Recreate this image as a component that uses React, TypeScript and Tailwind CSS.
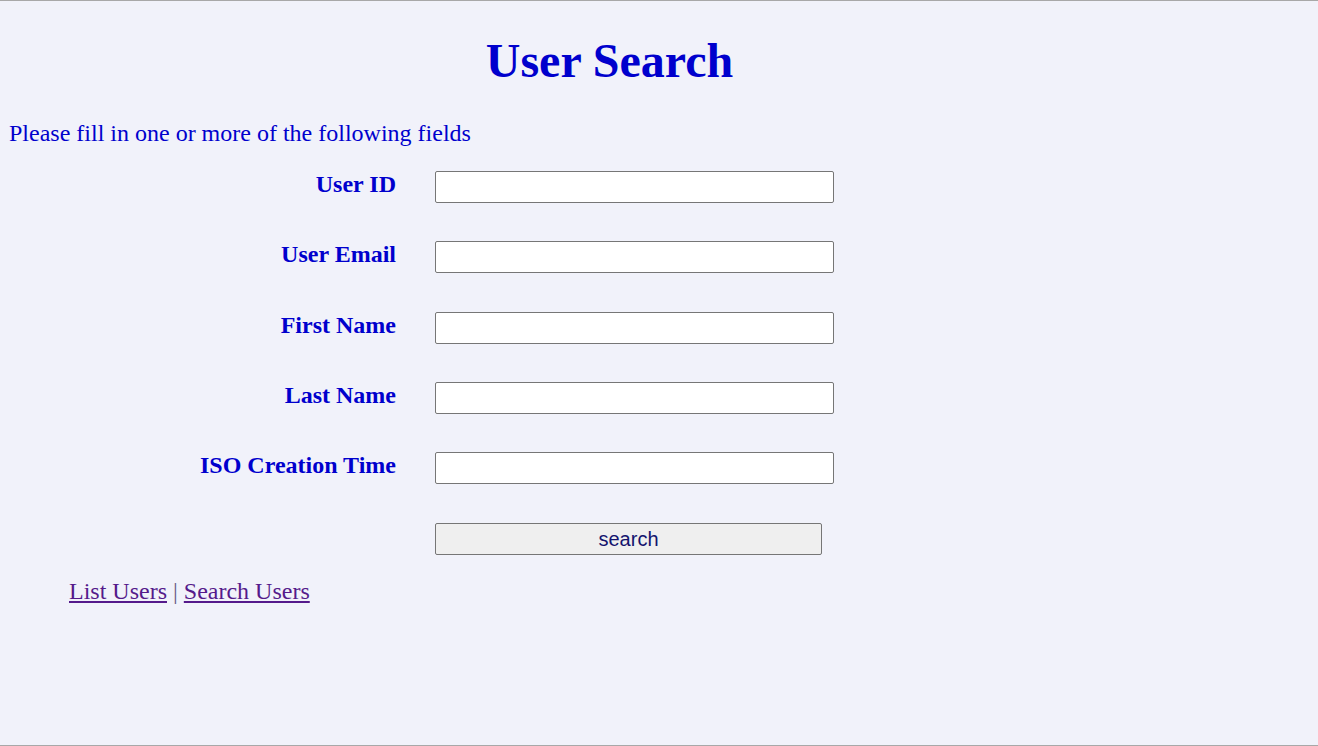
import React from 'react';

const fields = ['User ID', 'User Email', 'First Name', 'Last Name', 'ISO Creation Time'];

const serif = "font-['Liberation_Serif','Times_New_Roman',serif]";

const App: React.FC = () => {
  return (
    <div className={`h-[746px] overflow-hidden border-y border-[#a8a8a8] bg-[#f1f2fa] px-2 text-[#0000cd] ${serif}`}>
      <h1 className="mt-8 w-[1203px] text-center text-[48px] font-bold leading-[1.15]">User Search</h1>
      <p className="ml-px mt-[32px] text-[24px] leading-[1.15]">Please fill in one or more of the following fields</p>

      <form className="mt-[23px] grid grid-cols-[388px_399px] gap-x-[39px] gap-y-[38.4px]">
        {fields.map((label) => (
          <React.Fragment key={label}>
            <label className="text-right text-[24px] font-bold leading-[1.15]">{label}</label>
            <input
              type="text"
              className="h-8 w-[399px] rounded-[2px] border border-[#767676] bg-white px-1 text-[20px] outline-none"
            />
          </React.Fragment>
        ))}
        <div />
        <button
          type="button"
          className="h-8 w-[387px] rounded-[2px] border border-[#767676] bg-[#efefef] font-['Liberation_Sans',Arial,sans-serif] text-[20px] leading-none text-[#14146e]"
        >
          search
        </button>
      </form>

      <p className="ml-[61px] mt-[23.5px] text-[24px] leading-[1.15]">
        <a href="#" className="text-[#551a8b] underline">List Users</a>
        <span className="text-[#665c85]"> | </span>
        <a href="#" className="text-[#551a8b] underline">Search Users</a>
      </p>
    </div>
  );
};

export default App;
